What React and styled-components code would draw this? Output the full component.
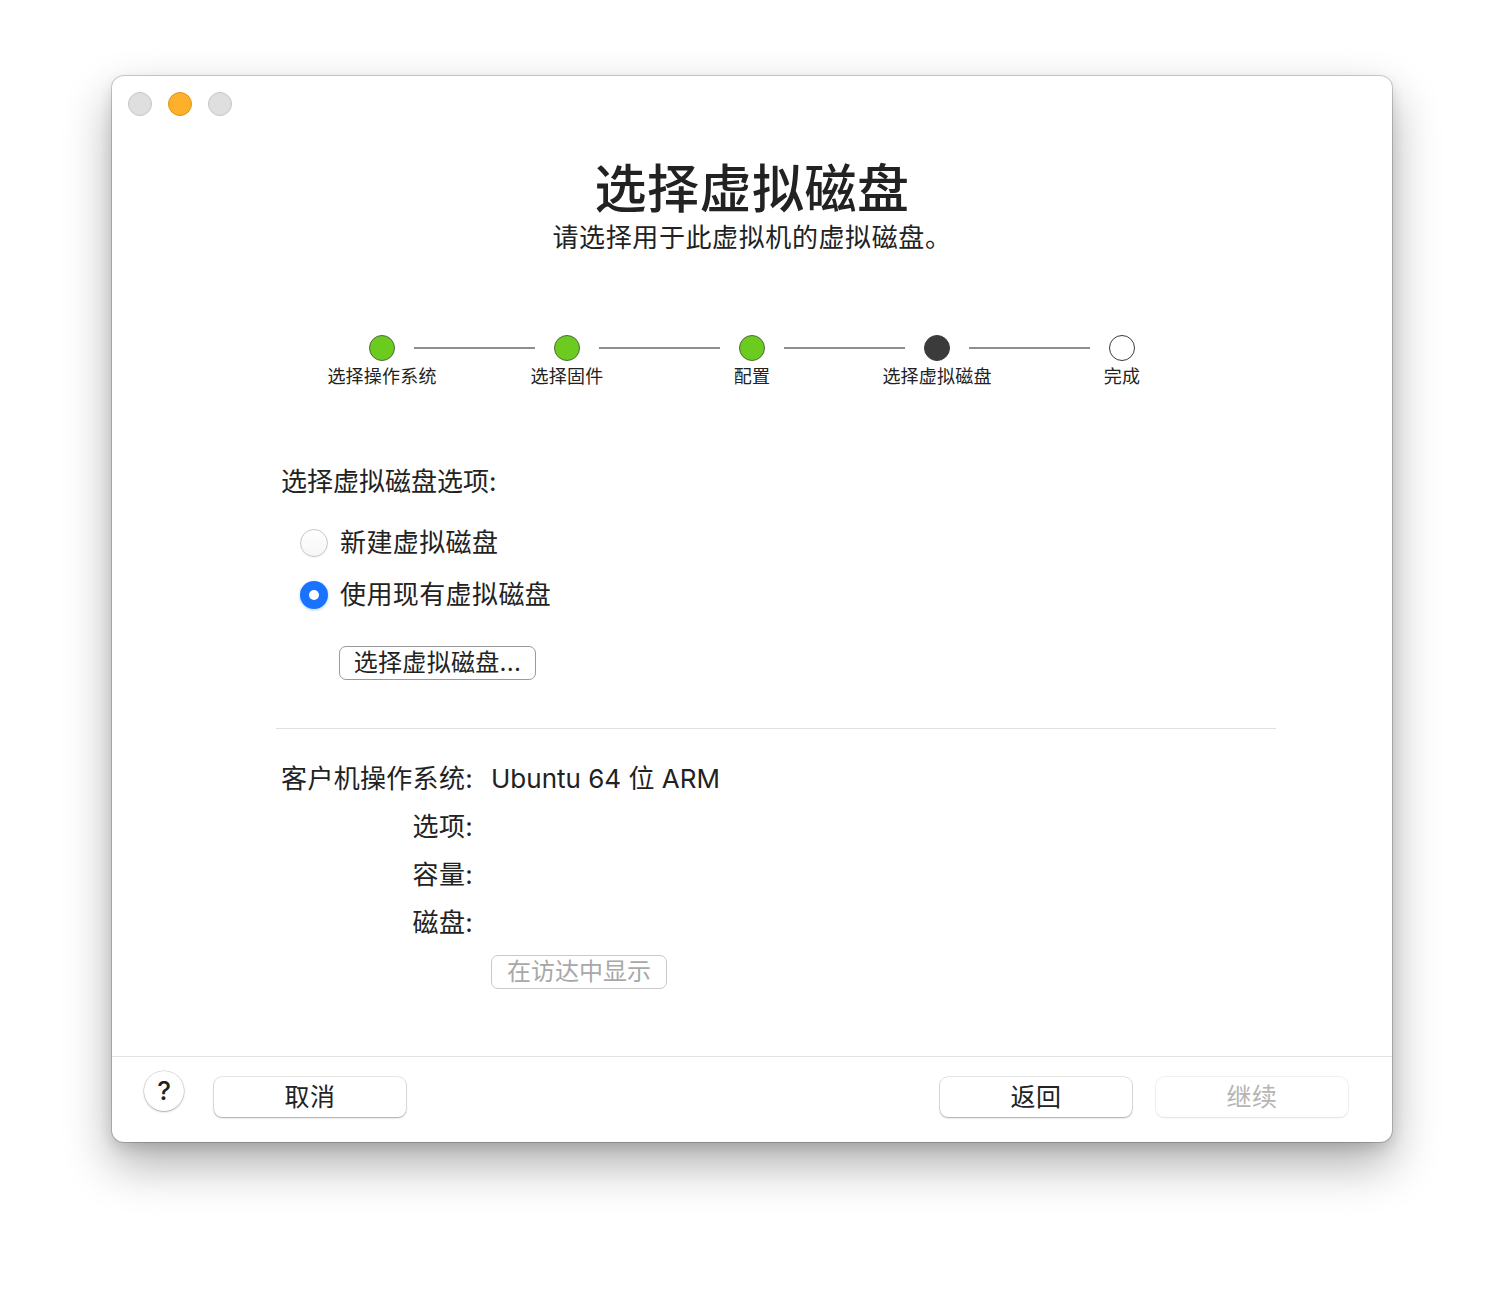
import React from "react";
import styled, { createGlobalStyle } from "styled-components";

const Global = createGlobalStyle`
  html, body { margin: 0; padding: 0; background: #ffffff; }
  body { font-family: Inter, "Noto Sans CJK SC", "Noto Sans", sans-serif; color: #222; }
  * { box-sizing: border-box; }
`;

const Page = styled.div`
  width: 1504px;
  height: 1290px;
  display: flex;
  justify-content: center;
  padding-top: 76px;
`;

const Window = styled.div`
  width: 1280px;
  height: 1066px;
  background: #fff;
  border-radius: 12px;
  box-shadow: 0 0 0 1px rgba(0,0,0,0.18), 0 22px 48px rgba(0,0,0,0.32), 0 6px 14px rgba(0,0,0,0.12);
  display: flex;
  flex-direction: column;
  overflow: hidden;
`;

const TitleBar = styled.div`
  height: 56px;
  display: flex;
  align-items: center;
  gap: 16px;
  padding-left: 16px;
`;

const Light = styled.span`
  width: 24px;
  height: 24px;
  border-radius: 50%;
  background: ${p => p.$c};
  border: 1px solid ${p => p.$b};
`;

const Main = styled.div`
  flex: 1;
  display: flex;
  flex-direction: column;
`;

const Title = styled.h1`
  margin: 28px 0 0;
  font-size: 52px;
  line-height: 60px;
  font-weight: 500;
  text-align: center;
  color: #222;
  letter-spacing: 0.5px;
`;

const Subtitle = styled.p`
  margin: 2px 0 0;
  font-size: 26px;
  line-height: 32px;
  text-align: center;
  color: #222;
  letter-spacing: 0.6px;
`;

const Steps = styled.div`
  margin: 81px auto 0;
  display: grid;
  grid-template-columns: repeat(5, 185px);
`;

const Step = styled.div`
  position: relative;
  display: flex;
  flex-direction: column;
  align-items: center;
  gap: 4px;
  &:not(:last-child)::after {
    content: "";
    position: absolute;
    top: 12px;
    left: calc(50% + 32px);
    width: 121px;
    height: 2px;
    background: #8e8e8e;
  }
`;

const Dot = styled.span`
  width: 26px;
  height: 26px;
  border-radius: 50%;
  background: ${p => (p.$state === "done" ? "#6bcb1f" : p.$state === "current" ? "#3b3b3b" : "#fff")};
  border: 1px solid ${p => (p.$state === "done" ? "#4c6b36" : "#3b3b3b")};
`;

const StepLabel = styled.span`
  font-size: 18px;
  line-height: 24px;
  color: #222;
  letter-spacing: 0.2px;
`;

const Content = styled.div`
  padding-left: 169px;
  display: flex;
  flex-direction: column;
  align-items: flex-start;
`;

const SectionLabel = styled.div`
  margin-top: 77px;
  font-size: 26px;
  line-height: 32px;
`;

const RadioList = styled.div`
  margin-top: 27px;
  margin-left: 19px;
  display: flex;
  flex-direction: column;
  gap: 16px;
`;

const RadioRow = styled.label`
  display: flex;
  align-items: center;
  gap: 12px;
  font-size: 26px;
  line-height: 36px;
  letter-spacing: 0.4px;
`;

const RadioCircle = styled.span`
  width: 28px;
  height: 28px;
  border-radius: 50%;
  display: flex;
  align-items: center;
  justify-content: center;
  ${p =>
    p.$on
      ? `background: #1a73ff; box-shadow: 0 1px 3px rgba(26,115,255,0.35);`
      : `background: linear-gradient(#fff, #f6f6f6); border: 1px solid #c8c8c8; box-shadow: 0 1px 1px rgba(0,0,0,0.06);`}
  &::after {
    content: "";
    display: ${p => (p.$on ? "block" : "none")};
    width: 10px;
    height: 10px;
    border-radius: 50%;
    background: #fff;
  }
`;

const PushButton = styled.button`
  font-family: inherit;
  font-size: ${p => p.$size || 24}px;
  line-height: 30px;
  height: 34px;
  padding: 0 12px;
  background: #fff;
  color: ${p => (p.$disabled ? "#a8a8a8" : "#222")};
  border: 1.5px solid ${p => (p.$disabled ? "#c9c9c9" : "#9a9a9a")};
  border-radius: 7px;
`;

const ChooseButton = styled(PushButton)`
  margin-top: 33px;
  margin-left: 58px;
  width: 197px;
  letter-spacing: 0.3px;
`;

const Divider = styled.hr`
  margin: 48px 0 0 164px;
  width: 1000px;
  border: 0;
  height: 1px;
  background: #e0e0e0;
`;

const Info = styled.div`
  margin: 23px 0 0 169px;
  display: grid;
  grid-template-columns: 192px auto;
  column-gap: 18px;
  grid-auto-rows: 48px;
  align-items: center;
  font-size: 26px;
`;

const InfoLabel = styled.span`
  text-align: right;
  white-space: nowrap;
  letter-spacing: 0.3px;
`;

const InfoValue = styled.span`
  font-size: 26px;
  white-space: nowrap;
`;

const RevealButton = styled(PushButton)`
  grid-column: 2;
  justify-self: start;
  margin-top: 7px;
  width: 176px;
`;

const Footer = styled.div`
  height: 86px;
  border-top: 1px solid #e2e2e2;
  display: flex;
  align-items: flex-start;
  padding: 20px 44px 0 32px;
`;

const HelpButton = styled.button`
  width: 40px;
  height: 40px;
  border-radius: 50%;
  border: none;
  background: #fff;
  box-shadow: 0 0 0 0.5px rgba(0,0,0,0.2), 0 1px 2px rgba(0,0,0,0.25);
  font-family: Inter, "Noto Sans", sans-serif;
  font-size: 26px;
  font-weight: 500;
  color: #222;
  display: flex;
  align-items: center;
  justify-content: center;
  padding: 0 0 2px;
  margin-top: -6px;
`;

const FooterButton = styled.button`
  width: 192px;
  height: 40px;
  border-radius: 8px;
  border: none;
  background: #fff;
  box-shadow: 0 0 0 0.5px rgba(0,0,0,${p => (p.$disabled ? 0.1 : 0.18)}), 0 1px 2px rgba(0,0,0,${p => (p.$disabled ? 0.08 : 0.28)});
  font-family: inherit;
  font-size: 25px;
  padding: 0 0 4px;
  letter-spacing: 0.5px;
  color: ${p => (p.$disabled ? "#b5b5b5" : "#222")};
  margin-left: ${p => p.$ml || 0}px;
`;

const Spacer = styled.div`
  flex: 1;
`;

const steps = [
  { label: "选择操作系统", state: "done" },
  { label: "选择固件", state: "done" },
  { label: "配置", state: "done" },
  { label: "选择虚拟磁盘", state: "current" },
  { label: "完成", state: "todo" },
];

export default function App() {
  return (
    <>
      <Global />
      <Page>
        <Window>
          <TitleBar>
            <Light $c="#dfdfdf" $b="#c6c6c6" />
            <Light $c="#fdb02b" $b="#dd9516" />
            <Light $c="#dfdfdf" $b="#c6c6c6" />
          </TitleBar>
          <Main>
            <Title>选择虚拟磁盘</Title>
            <Subtitle>请选择用于此虚拟机的虚拟磁盘。</Subtitle>
            <Steps>
              {steps.map(s => (
                <Step key={s.label}>
                  <Dot $state={s.state} />
                  <StepLabel>{s.label}</StepLabel>
                </Step>
              ))}
            </Steps>
            <Content>
              <SectionLabel>选择虚拟磁盘选项:</SectionLabel>
              <RadioList>
                <RadioRow>
                  <RadioCircle />
                  新建虚拟磁盘
                </RadioRow>
                <RadioRow>
                  <RadioCircle $on />
                  使用现有虚拟磁盘
                </RadioRow>
              </RadioList>
              <ChooseButton>选择虚拟磁盘...</ChooseButton>
            </Content>
            <Divider />
            <Info>
              <InfoLabel>客户机操作系统:</InfoLabel>
              <InfoValue>Ubuntu 64 位 ARM</InfoValue>
              <InfoLabel>选项:</InfoLabel>
              <span />
              <InfoLabel>容量:</InfoLabel>
              <span />
              <InfoLabel>磁盘:</InfoLabel>
              <span />
              <RevealButton $disabled>在访达中显示</RevealButton>
            </Info>
          </Main>
          <Footer>
            <HelpButton>?</HelpButton>
            <FooterButton $ml={30}>取消</FooterButton>
            <Spacer />
            <FooterButton>返回</FooterButton>
            <FooterButton $ml={24} $disabled>继续</FooterButton>
          </Footer>
        </Window>
      </Page>
    </>
  );
}
